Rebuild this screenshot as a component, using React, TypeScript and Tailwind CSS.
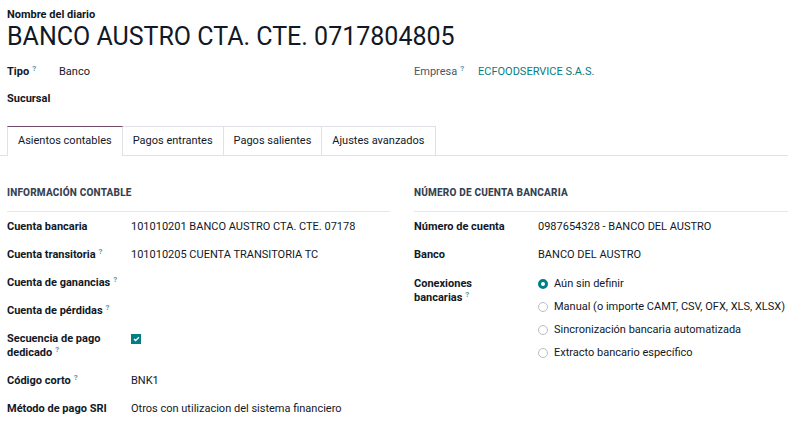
import React from 'react'

const font = { fontFamily: 'Roboto, "Noto Sans", sans-serif' }

function Help() {
  return <sup className="ml-[3px] text-[8px] font-bold text-[#5f9ea8]">?</sup>
}

function Row({ label, help, children }: { label: React.ReactNode; help?: boolean; children?: React.ReactNode }) {
  return (
    <div className="flex pb-[14px]">
      <div className="w-[124px] shrink-0 text-[11px] font-bold leading-[14px] text-[#111827]">
        {label}
        {help && <Help />}
      </div>
      <div className="w-[224px] overflow-hidden whitespace-nowrap text-[11px] leading-[14px] text-[#111827]">{children}</div>
    </div>
  )
}

function Radio({ checked, label }: { checked?: boolean; label: string }) {
  return (
    <div className="flex h-[23px] items-center gap-[6px] whitespace-nowrap">
      {checked ? (
        <span className="h-[10px] w-[10px] rounded-full border-[3px] border-[#017e84] bg-white" />
      ) : (
        <span className="h-[10px] w-[10px] rounded-full border border-[#b8bec4] bg-white" />
      )}
      <span className="text-[11px] text-[#111827]">{label}</span>
    </div>
  )
}

export default function App() {
  const tabs = ['Asientos contables', 'Pagos entrantes', 'Pagos salientes', 'Ajustes avanzados']
  return (
    <div className="h-[432px] w-[788px] overflow-hidden bg-white" style={font}>
      <div className="px-[7px] pt-[7px]">
        <div className="text-[11px] font-bold leading-[15px] text-[#111827]">Nombre del diario</div>
        <h1 className="text-[25px] leading-[30px] text-[#111827]">BANCO AUSTRO CTA. CTE. 0717804805</h1>
        <div className="mt-[12px] flex text-[11px] leading-[15px]">
          <div className="flex w-[407px]">
            <div className="w-[52px] font-bold text-[#111827]">
              Tipo<Help />
            </div>
            <div className="text-[#111827]">Banco</div>
          </div>
          <div className="flex">
            <div className="w-[64px] text-[#4b5563]">
              Empresa<Help />
            </div>
            <div className="text-[#017e84]">ECFOODSERVICE S.A.S.</div>
          </div>
        </div>
        <div className="mt-[12px] text-[11px] font-bold leading-[15px] text-[#111827]">Sucursal</div>
      </div>

      <div className="mt-[20px] flex border-b border-[#dee2e6] pl-[7px]">
        {tabs.map((t, i) => (
          <div
            key={t}
            className={`-mb-px flex h-[30px] items-center px-[10px] text-[11px] text-[#111827] ${
              i === 0
                ? 'border-x border-t border-x-[#dee2e6] border-t-[#714b67] bg-white'
                : 'border-b border-r border-t border-[#dee2e6]'
            }`}
          >
            {t}
          </div>
        ))}
      </div>

      <div className="flex pl-[7px] pt-[31px]">
        <div className="w-[383px]">
          <div className="border-b border-[#e5e7eb] pb-[12px] text-[10px] font-extrabold uppercase leading-[12px] tracking-[0.02em] text-[#374151]">
            Información contable
          </div>
          <div className="pt-[8px]">
            <Row label="Cuenta bancaria">101010201 BANCO AUSTRO CTA. CTE. 0717804805</Row>
            <Row label="Cuenta transitoria" help>101010205 CUENTA TRANSITORIA TC</Row>
            <Row label="Cuenta de ganancias" help />
            <Row label="Cuenta de pérdidas" help />
            <Row
              label={
                <>
                  Secuencia de pago
                  <br />
                  dedicado
                </>
              }
              help
            >
              <span className="mt-[2px] flex h-[10px] w-[10px] items-center justify-center bg-[#017e84]">
                <svg width="7" height="6" viewBox="0 0 7 6">
                  <path d="M1 3l1.6 1.6L6 1.2" stroke="white" strokeWidth="1.4" fill="none" />
                </svg>
              </span>
            </Row>
            <Row label="Código corto" help>BNK1</Row>
            <Row label="Método de pago SRI">Otros con utilizacion del sistema financiero</Row>
          </div>
        </div>
        <div className="ml-[24px] flex-1">
          <div className="border-b border-[#e5e7eb] pb-[12px] text-[10px] font-extrabold uppercase leading-[12px] tracking-[0.02em] text-[#374151]">
            Número de cuenta bancaria
          </div>
          <div className="pt-[8px] text-[11px] leading-[14px]">
            <div className="flex pb-[14px]">
              <div className="w-[124px] font-bold text-[#111827]">Número de cuenta</div>
              <div className="text-[#111827]">0987654328 - BANCO DEL AUSTRO</div>
            </div>
            <div className="flex pb-[14px]">
              <div className="w-[124px] font-bold text-[#111827]">Banco</div>
              <div className="text-[#111827]">BANCO DEL AUSTRO</div>
            </div>
            <div className="flex">
              <div className="w-[124px] pt-[1px] font-bold text-[#111827]">
                Conexiones
                <br />
                bancarias<Help />
              </div>
              <div className="-mt-[4px]">
                <Radio checked label="Aún sin definir" />
                <Radio label="Manual (o importe CAMT, CSV, OFX, XLS, XLSX)" />
                <Radio label="Sincronización bancaria automatizada" />
                <Radio label="Extracto bancario específico" />
              </div>
            </div>
          </div>
        </div>
      </div>
    </div>
  )
}
